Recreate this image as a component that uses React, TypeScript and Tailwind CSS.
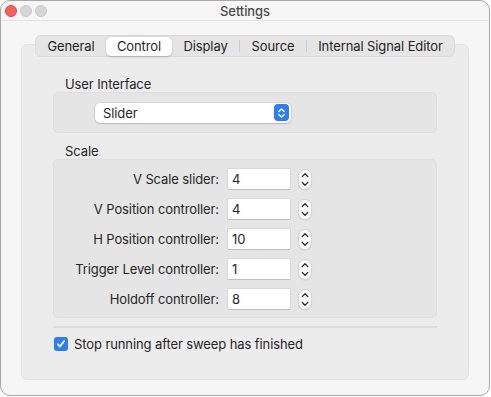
import React from 'react';

const tabs = [
  { label: 'General', w: 'w-[70px]' },
  { label: 'Control', w: 'w-[66px]' },
  { label: 'Display', w: 'w-[67px]' },
  { label: 'Source', w: 'w-[66px]' },
  { label: 'Internal Signal Editor', w: 'w-[147px]' },
];

const rows = [
  { label: 'V Scale slider:', value: '4' },
  { label: 'V Position controller:', value: '4' },
  { label: 'H Position controller:', value: '10' },
  { label: 'Trigger Level controller:', value: '1' },
  { label: 'Holdoff controller:', value: '8' },
];

const Stepper = () => (
  <div className="ml-[8px] w-[14px] h-[21px] rounded-[7px] bg-[#fafafa] border border-[#d4d4d4] shadow-[0_0.5px_1px_rgba(0,0,0,0.1)] flex flex-col items-center justify-between py-[2px]">
    <svg width="8" height="6" viewBox="0 0 8 6" fill="none">
      <path d="M1.2 4.6 L4 1.8 L6.8 4.6" stroke="#2a2a2a" strokeWidth="1.3" strokeLinecap="round" strokeLinejoin="round" />
    </svg>
    <svg width="8" height="6" viewBox="0 0 8 6" fill="none">
      <path d="M1.2 1.4 L4 4.2 L6.8 1.4" stroke="#2a2a2a" strokeWidth="1.3" strokeLinecap="round" strokeLinejoin="round" />
    </svg>
  </div>
);

export default function App() {
  return (
    <div className="w-[491px] h-[397px] bg-white font-['Inter','Liberation_Sans',sans-serif] text-[13px] tracking-[-0.1px] text-[#262626]">
      <div className="w-[490px] h-[396px] rounded-[10px] border border-[#a8a8a8] bg-[#f6f6f6] overflow-hidden flex flex-col">
        {/* title bar */}
        <div className="h-[20px] shrink-0 border-b border-[#e3e3e3] grid grid-cols-[1fr_auto_1fr] items-center">
          <div className="flex items-center gap-[3px] pl-[4px]">
            <span className="w-[12px] h-[12px] rounded-full bg-[#fe5f57] border border-[#e14640]" />
            <span className="w-[12px] h-[12px] rounded-full bg-[#d6d6d6] border border-[#c8c8c8]" />
            <span className="w-[12px] h-[12px] rounded-full bg-[#d6d6d6] border border-[#c8c8c8]" />
          </div>
          <div className="text-[13px] text-[#4b4b4b] font-medium leading-[16px]">Settings</div>
          <div />
        </div>

        <div className="flex-1 px-[20px] pt-[14px] flex flex-col">
          {/* segmented tabs */}
          <div className="relative z-10 flex justify-center">
            <div className="flex items-center h-[22px] rounded-[6px] bg-[#e5e5e5] border border-[#dadada]">
              {tabs.map((t, i) => (
                <React.Fragment key={t.label}>
                  {i === 3 || i === 4 ? <span className="w-px h-[12px] bg-[#cbcbcb]" /> : null}
                  <div
                    className={
                      t.label === 'Control'
                        ? `${t.w} h-[19px] rounded-[5px] bg-white shadow-[0_0.5px_2px_rgba(0,0,0,0.22)] flex items-center justify-center leading-[16px] text-[#1f1f1f]`
                        : `${t.w} h-[19px] flex items-center justify-center leading-[16px] text-[#1f1f1f]`
                    }
                  >
                    {t.label}
                  </div>
                </React.Fragment>
              ))}
            </div>
          </div>

          {/* tab box */}
          <div className="-mt-[13px] h-[336px] rounded-[6px] bg-[#ececec] border border-[#e2e2e2] px-[31px] pt-[31px] flex flex-col">
            <div className="leading-[16px] pl-[12px]">User Interface</div>
            <div className="h-[41px] rounded-[5px] bg-[#e5e5e5] border border-[#dedede] flex items-center pl-[41px]">
              <div className="w-[196px] h-[20px] rounded-[5px] bg-white shadow-[0_0_0_0.5px_rgba(0,0,0,0.12),0_1px_1.5px_rgba(0,0,0,0.15)] flex items-center justify-between pl-[8px] pr-[2px]">
                <span className="leading-[16px]">Slider</span>
                <span className="w-[15px] h-[17px] rounded-[4px] bg-[#2a7ef7] flex items-center justify-center">
                  <svg width="9" height="12" viewBox="0 0 9 12" fill="none">
                    <path d="M1.8 4.6 L4.5 2 L7.2 4.6" stroke="white" strokeWidth="1.4" strokeLinecap="round" strokeLinejoin="round" />
                    <path d="M1.8 7.4 L4.5 10 L7.2 7.4" stroke="white" strokeWidth="1.4" strokeLinecap="round" strokeLinejoin="round" />
                  </svg>
                </span>
              </div>
            </div>

            <div className="mt-[10px] leading-[16px] pl-[12px]">Scale</div>
            <div className="h-[159px] rounded-[5px] bg-[#e5e5e5] border border-[#dedede] pt-[9px] flex flex-col gap-[10px]">
              {rows.map((r) => (
                <div key={r.label} className="flex items-center h-[20px]">
                  <span className="w-[165px] text-right leading-[16px]">{r.label}</span>
                  <div className="ml-[9px] w-[62px] h-[20px] bg-white shadow-[0_0_0_0.5px_rgba(0,0,0,0.1),0_1px_0_rgba(0,0,0,0.12)] flex items-center pl-[4px] leading-[16px]">
                    {r.value}
                  </div>
                  <Stepper />
                </div>
              ))}
            </div>

            <div className="mt-[8px] h-[2px] bg-[#dcdcdc]" />

            <div className="mt-[8px] flex items-center gap-[6px] pl-[1px]">
              <span className="w-[14px] h-[14px] rounded-[3px] bg-[#2a7ef7] flex items-center justify-center">
                <svg width="10" height="10" viewBox="0 0 10 10" fill="none">
                  <path d="M1.8 5.2 L4 7.6 L8.2 2" stroke="white" strokeWidth="1.7" strokeLinecap="round" strokeLinejoin="round" />
                </svg>
              </span>
              <span className="leading-[16px]">Stop running after sweep has finished</span>
            </div>
          </div>
        </div>
      </div>
    </div>
  );
}
